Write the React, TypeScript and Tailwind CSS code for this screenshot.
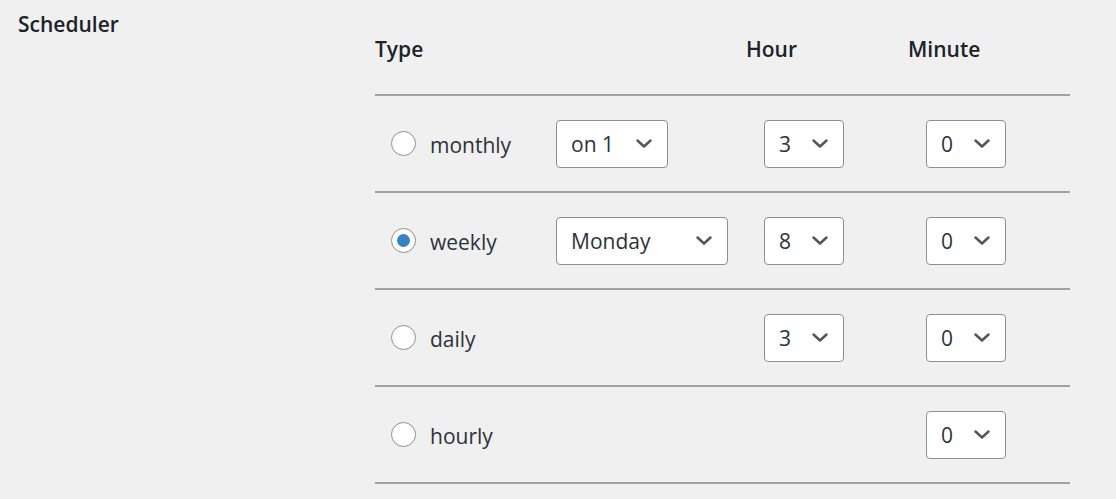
import React from "react";

interface Row {
  type: string;
  checked?: boolean;
  day?: { value: string; width: string };
  hour?: string;
  minute: string;
}

const rows: Row[] = [
  { type: "monthly", day: { value: "on 1", width: "w-[112px]" }, hour: "3", minute: "0" },
  { type: "weekly", checked: true, day: { value: "Monday", width: "w-[172px]" }, hour: "8", minute: "0" },
  { type: "daily", hour: "3", minute: "0" },
  { type: "hourly", minute: "0" },
];

function Chevron() {
  return (
    <svg width="18" height="10" viewBox="0 0 18 10" fill="none" className="shrink-0">
      <path d="M2.5 1.5 L9 7.5 L15.5 1.5" stroke="#50575e" strokeWidth="2.5" strokeLinecap="round" strokeLinejoin="round" />
    </svg>
  );
}

function Select({ value, width }: { value: string; width: string }) {
  return (
    <div
      className={`${width} h-[48px] flex items-center justify-between pl-[14px] pr-[14px] bg-white border border-[#8c8f94] rounded-[4px] text-[21px] text-[#2c3338]`}
    >
      <span className="leading-none pt-[2px]">{value}</span>
      <Chevron />
    </div>
  );
}

function Radio({ checked }: { checked?: boolean }) {
  return (
    <div className="w-[25px] h-[25px] rounded-full border border-[#8c8f94] bg-white flex items-center justify-center shrink-0">
      {checked && <div className="w-[13px] h-[13px] rounded-full bg-[#3582c4]" />}
    </div>
  );
}

export default function App() {
  return (
    <div
      className="w-[1116px] h-[499px] bg-[#f0f0f1] flex overflow-hidden"
      style={{ fontFamily: '"Open Sans", "Noto Sans", sans-serif' }}
    >
      <div className="w-[375px] shrink-0 pl-[18px] pt-[9px]">
        <h2 className="text-[21px] font-semibold text-[#1d2327] leading-[30px]">Scheduler</h2>
      </div>
      <div className="w-[695px] shrink-0">
        <div className="grid grid-cols-[181px_190px_162px_162px] h-[94px] pt-[34px] text-[21px] font-semibold text-[#1d2327] leading-[30px]">
          <div>Type</div>
          <div />
          <div>Hour</div>
          <div>Minute</div>
        </div>
        <div className="h-[2px] bg-[#a0a3a6]" />
        {rows.map((row) => (
          <div key={row.type}>
            <div className="grid grid-cols-[181px_190px_162px_162px] h-[95px] items-center">
              <div className="flex items-center gap-[14px] pl-[16px]">
                <Radio checked={row.checked} />
                <span className="text-[21px] text-[#2c3338] leading-none pt-[3px]">{row.type}</span>
              </div>
              <div>{row.day && <Select value={row.day.value} width={row.day.width} />}</div>
              <div className="pl-[18px]">{row.hour && <Select value={row.hour} width="w-[80px]" />}</div>
              <div className="pl-[18px]">
                <Select value={row.minute} width="w-[80px]" />
              </div>
            </div>
            <div className="h-[2px] bg-[#a0a3a6]" />
          </div>
        ))}
      </div>
    </div>
  );
}
